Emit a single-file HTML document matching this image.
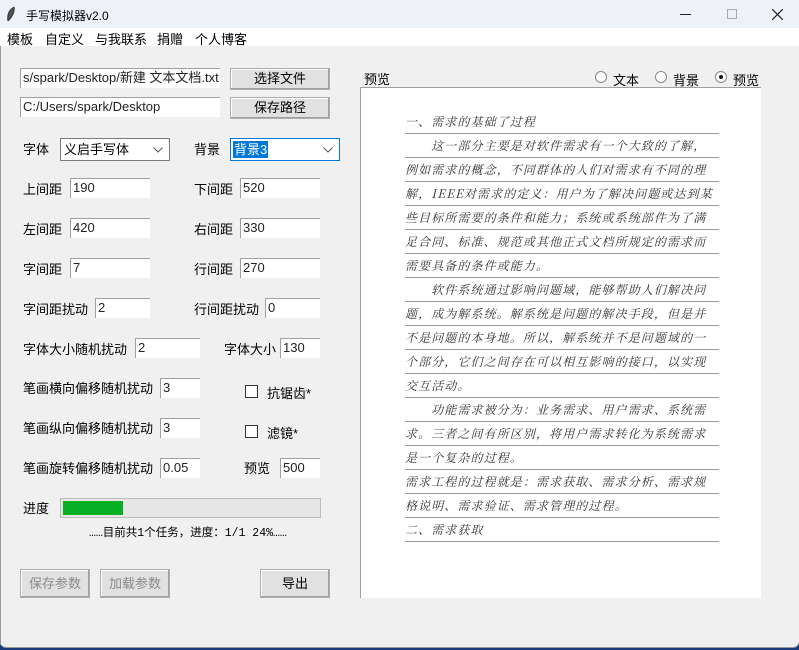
<!DOCTYPE html>
<html><head><meta charset="utf-8"><style>
*{margin:0;padding:0;box-sizing:border-box}
body{width:799px;height:650px;overflow:hidden;background:#1b3a7a;font-family:"Liberation Sans","Noto Sans CJK SC",sans-serif;font-size:13px;color:#000;position:relative}
#win{position:absolute;left:0;top:0;width:799px;height:648px;background:#f0f0f0;border-bottom:1px solid #9a9a9a;border-radius:0 0 6px 6px;overflow:hidden}
#lb{position:absolute;left:0;top:28px;width:1px;height:620px;background:#9a9a9a}
.a{position:absolute;white-space:nowrap}
#title{position:absolute;left:0;top:0;width:799px;height:28px;background:#eef2f8}
#menu{position:absolute;left:0;top:28px;width:799px;height:18px;background:#fff}
.e{position:absolute;background:#fff;border-top:1px solid #a0a0a0;border-left:1px solid #a0a0a0;height:20px;font-size:13px;line-height:18px;padding-left:2px;color:#222}
.b{position:absolute;background:#e1e1e1;border:1px solid #adadad;box-shadow:inset -1px -1px 0 #a0a0a0,inset 1px 1px 0 #fff;text-align:center;font-size:13px}
.cb{position:absolute;width:13px;height:13px;border:1px solid #333;background:#fff}
.r{position:absolute;width:12px;height:12px;border:1px solid #888;border-radius:50%;background:#fff}
.hw{position:absolute;left:405px;width:314px;height:24px;border-bottom:1.5px solid #9a9a9a;font-family:"Noto Serif CJK SC","Liberation Serif",serif;font-size:12px;letter-spacing:1.1px;line-height:24px;color:#333;white-space:nowrap;overflow:hidden;font-style:italic}
</style></head><body><div id="win">
<div id="lb"></div>
<div id="title">
<svg class="a" style="left:6px;top:6px" width="10" height="16" viewBox="0 0 10 16"><path d="M8 1 C3 4 1 9 2 15 M8 1 C9 6 6 11 2 15" stroke="#333" fill="#555" stroke-width="1"/></svg>
<div class="a" style="left:26px;top:7px;font-size:12px">手写模拟器v2.0</div>
<div class="a" style="left:680px;top:14px;width:11px;height:1px;background:#222"></div>
<div class="a" style="left:727px;top:9px;width:10px;height:10px;border:1px solid #aaa"></div>
<svg class="a" style="left:772px;top:9px" width="11" height="11"><path d="M0 0L11 11M11 0L0 11" stroke="#222" stroke-width="1.2"/></svg>
</div>
<div id="menu">
<div class="a" style="left:7px;top:1px">模板</div>
<div class="a" style="left:45px;top:1px">自定义</div>
<div class="a" style="left:95px;top:1px">与我联系</div>
<div class="a" style="left:157px;top:1px">捐赠</div>
<div class="a" style="left:195px;top:1px">个人博客</div>
</div>

<div class="e" style="left:20px;top:68px;width:200px;overflow:hidden">s/spark/Desktop/新建 文本文档.txt</div>
<div class="b" style="left:230px;top:68px;width:100px;height:22px;line-height:20px">选择文件</div>
<div class="e" style="left:20px;top:97px;width:200px">C:/Users/spark/Desktop</div>
<div class="b" style="left:230px;top:97px;width:100px;height:22px;line-height:20px">保存路径</div>

<div class="a" style="left:23px;top:139px">字体</div>
<div class="a" style="left:60px;top:138px;width:110px;height:23px;background:#fff;border:1px solid #7a7a7a;padding:3px 3px;line-height:15px">义启手写体<svg style="position:absolute;right:6px;top:8px" width="10" height="6"><path d="M0.5 0.5L5 5L9.5 0.5" stroke="#555" fill="none"/></svg></div>
<div class="a" style="left:194px;top:139px">背景</div>
<div class="a" style="left:230px;top:138px;width:110px;height:23px;background:#fff;border:1px solid #0078d7;padding:2px 2px"><span style="background:#0078d7;color:#fff;line-height:17px;display:inline-block;padding:0 1px">背景3</span><svg style="position:absolute;right:6px;top:8px" width="10" height="6"><path d="M0.5 0.5L5 5L9.5 0.5" stroke="#555" fill="none"/></svg></div>

<div class="a" style="left:23px;top:179px">上间距</div><div class="e" style="left:70px;top:178px;width:80px">190</div>
<div class="a" style="left:194px;top:179px">下间距</div><div class="e" style="left:240px;top:178px;width:80px">520</div>
<div class="a" style="left:23px;top:219px">左间距</div><div class="e" style="left:70px;top:218px;width:80px">420</div>
<div class="a" style="left:194px;top:219px">右间距</div><div class="e" style="left:240px;top:218px;width:80px">330</div>
<div class="a" style="left:23px;top:259px">字间距</div><div class="e" style="left:70px;top:258px;width:80px">7</div>
<div class="a" style="left:194px;top:259px">行间距</div><div class="e" style="left:240px;top:258px;width:80px">270</div>
<div class="a" style="left:23px;top:299px">字间距扰动</div><div class="e" style="left:95px;top:298px;width:55px">2</div>
<div class="a" style="left:194px;top:299px">行间距扰动</div><div class="e" style="left:265px;top:298px;width:55px">0</div>
<div class="a" style="left:23px;top:339px">字体大小随机扰动</div><div class="e" style="left:135px;top:338px;width:65px">2</div>
<div class="a" style="left:224px;top:339px">字体大小</div><div class="e" style="left:280px;top:338px;width:40px">130</div>
<div class="a" style="left:23px;top:378px">笔画横向偏移随机扰动</div><div class="e" style="left:160px;top:378px;width:40px">3</div>
<div class="cb" style="left:245px;top:385px"></div><div class="a" style="left:267px;top:383px">抗锯齿*</div>
<div class="a" style="left:23px;top:418px">笔画纵向偏移随机扰动</div><div class="e" style="left:160px;top:418px;width:40px">3</div>
<div class="cb" style="left:245px;top:425px"></div><div class="a" style="left:267px;top:423px">滤镜*</div>
<div class="a" style="left:23px;top:458px">笔画旋转偏移随机扰动</div><div class="e" style="left:160px;top:458px;width:40px">0.05</div>
<div class="a" style="left:244px;top:458px">预览</div><div class="e" style="left:280px;top:458px;width:40px">500</div>

<div class="a" style="left:23px;top:498px">进度</div>
<div class="a" style="left:60px;top:498px;width:261px;height:20px;background:#e6e6e6;border:1px solid #bcbcbc"><div style="position:absolute;left:2px;top:2px;width:60px;height:14px;background:#06b025"></div></div>
<div class="a" style="left:89px;top:524px;font-size:11.5px;font-family:'Liberation Mono','Noto Sans CJK SC',monospace">……目前共1个任务，进度：1/1 24%……</div>

<div class="b" style="left:20px;top:569px;width:70px;height:29px;line-height:27px;color:#8a8a8a">保存参数</div>
<div class="b" style="left:100px;top:569px;width:70px;height:29px;line-height:27px;color:#8a8a8a">加载参数</div>
<div class="b" style="left:260px;top:569px;width:70px;height:29px;line-height:27px">导出</div>

<div class="a" style="left:364px;top:69px">预览</div>
<div class="r" style="left:595px;top:71px"></div><div class="a" style="left:613px;top:70px">文本</div>
<div class="r" style="left:655px;top:71px"></div><div class="a" style="left:673px;top:70px">背景</div>
<div class="r" style="left:715px;top:71px"><div style="position:absolute;left:3px;top:3px;width:4px;height:4px;border-radius:50%;background:#111"></div></div><div class="a" style="left:733px;top:70px">预览</div>

<div class="a" style="left:360px;top:87px;width:401px;height:511px;background:#fff;border-left:1px solid #a0a0a0;border-top:1px solid #a0a0a0"></div>
<div class="hw" style="top:110px">一、需求的基础了过程</div>
<div class="hw" style="top:134px">　　这一部分主要是对软件需求有一个大致的了解，</div>
<div class="hw" style="top:158px">例如需求的概念，不同群体的人们对需求有不同的理</div>
<div class="hw" style="top:182px">解，IEEE对需求的定义：用户为了解决问题或达到某</div>
<div class="hw" style="top:206px">些目标所需要的条件和能力；系统或系统部件为了满</div>
<div class="hw" style="top:230px">足合同、标准、规范或其他正式文档所规定的需求而</div>
<div class="hw" style="top:254px">需要具备的条件或能力。</div>
<div class="hw" style="top:278px">　　软件系统通过影响问题域，能够帮助人们解决问</div>
<div class="hw" style="top:302px">题，成为解系统。解系统是问题的解决手段，但是并</div>
<div class="hw" style="top:326px">不是问题的本身地。所以，解系统并不是问题域的一</div>
<div class="hw" style="top:350px">个部分，它们之间存在可以相互影响的接口，以实现</div>
<div class="hw" style="top:374px">交互活动。</div>
<div class="hw" style="top:398px">　　功能需求被分为：业务需求、用户需求、系统需</div>
<div class="hw" style="top:422px">求。三者之间有所区别，将用户需求转化为系统需求</div>
<div class="hw" style="top:446px">是一个复杂的过程。</div>
<div class="hw" style="top:470px">需求工程的过程就是：需求获取、需求分析、需求规</div>
<div class="hw" style="top:494px">格说明、需求验证、需求管理的过程。</div>
<div class="hw" style="top:518px">二、需求获取</div>
</div></body></html>
